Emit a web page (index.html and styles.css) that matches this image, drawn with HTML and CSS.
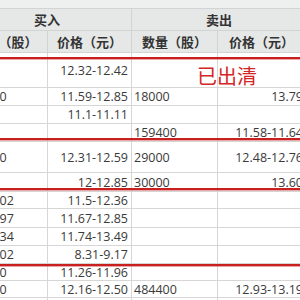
FILE: index.html
```html
<!DOCTYPE html>
<html lang="zh-CN">
<head>
<meta charset="utf-8">
<title>买入卖出</title>
<link rel="stylesheet" href="styles.css">
</head>
<body>
<div class="sheet">
  <div class="row strip"><div class="c wide"></div><div class="c wide"></div></div>
  <div class="row hdr hdr1"><div class="c wide">买入</div><div class="c wide">卖出</div></div>
  <div class="row hdr hdr2"><div class="c">数量（股）</div><div class="c">价格（元）</div><div class="c">数量（股）</div><div class="c">价格（元）</div></div>

  <div class="row r1"><div class="c q"></div><div class="c p">12.32-12.42</div><div class="c q"></div><div class="c p"></div></div>
  <div class="row r2"><div class="c q">20000</div><div class="c p">11.59-12.85</div><div class="c q">18000</div><div class="c p">13.79</div></div>
  <div class="row r3"><div class="c q"></div><div class="c p">11.1-11.11</div><div class="c q"></div><div class="c p"></div></div>
  <div class="row r4"><div class="c q"></div><div class="c p"></div><div class="c q">159400</div><div class="c p">11.58-11.64</div></div>
  <div class="row r5"><div class="c q">20000</div><div class="c p">12.31-12.59</div><div class="c q">29000</div><div class="c p">12.48-12.76</div></div>
  <div class="row r6"><div class="c q"></div><div class="c p">12-12.85</div><div class="c q">30000</div><div class="c p">13.60</div></div>
  <div class="row r7"><div class="c q">150002</div><div class="c p">11.5-12.36</div><div class="c q"></div><div class="c p"></div></div>
  <div class="row r8"><div class="c q">120097</div><div class="c p">11.67-12.85</div><div class="c q"></div><div class="c p"></div></div>
  <div class="row r9"><div class="c q">180034</div><div class="c p">11.74-13.49</div><div class="c q"></div><div class="c p"></div></div>
  <div class="row r10"><div class="c q">100002</div><div class="c p">8.31-9.17</div><div class="c q"></div><div class="c p"></div></div>
  <div class="row r11"><div class="c q">30000</div><div class="c p">11.26-11.96</div><div class="c q"></div><div class="c p"></div></div>
  <div class="row r12"><div class="c q">40000</div><div class="c p">12.16-12.50</div><div class="c q">484400</div><div class="c p">12.93-13.19</div></div>
  <div class="row r13"><div class="c q"></div><div class="c p"></div><div class="c q"></div><div class="c p"></div></div>

  <div class="mark m1"></div>
  <div class="mark m2"></div>
  <div class="mark m3"></div>
  <div class="mark m4"></div>
  <div class="done">已出清</div>
</div>
</body>
</html>
```

FILE: styles.css
```css
html, body {
  margin: 0;
  padding: 0;
  background: #ffffff;
  overflow: hidden;
}

.sheet {
  position: relative;
  margin-left: -37px;
  width: 343px;
  font-family: "Open Sans", "Noto Sans CJK SC", sans-serif;
  font-size: 12.5px;
  color: #3a3a3a;
}

.row {
  display: grid;
  grid-template-columns: 85px 84px 86px 88px;
  border-bottom: 1px solid #d6d6d6;
  box-sizing: border-box;
}

.c {
  border-right: 1px solid #d6d6d6;
  display: flex;
  align-items: center;
  white-space: nowrap;
  overflow: hidden;
  box-sizing: border-box;
}

.wide {
  grid-column: span 2;
  justify-content: center;
}

.strip {
  height: 9px;
  background: #eef0ef;
  border-bottom-color: #d2d4d3;
}
.strip .c { border-right: none; }

.hdr {
  background: #e6e8e7;
  font-family: "Noto Sans CJK SC", sans-serif;
  font-weight: bold;
  font-size: 13px;
  color: #333333;
  height: 22px;
  border-bottom-color: #d2d4d3;
}
.hdr .c { justify-content: center; border-right-color: #d2d4d3; }
.hdr1 .c:last-child { border-right: none; }

.q { justify-content: flex-start; padding-left: 8px; }
.row .c:nth-child(3).q { padding-left: 2px; }
.p { justify-content: flex-end; padding-right: 3px; }
.row .c:nth-child(4).p { padding-right: 2px; }

.r1 { height: 35px; }
.r2 { height: 18px; }
.r3 { height: 18px; }
.r4 { height: 18px; }
.r5 { height: 31px; }
.r6 { height: 19px; }
.r7 { height: 17px; }
.r8 { height: 19px; }
.r9 { height: 18px; }
.r10 { height: 18px; }
.r11 { height: 17px; }
.r12 { height: 17px; }
.r13 { height: 18px; }

.mark {
  position: absolute;
  left: 0;
  right: 0;
  height: 2px;
  background: #c8201f;
  box-shadow: 0 0 1px 0.5px rgba(210, 60, 60, 0.45);
}
.m1 { top: 57px; }
.m2 { top: 138px; }
.m3 { top: 188px; }
.m4 { top: 264px; }

.done {
  position: absolute;
  left: 234px;
  top: 64px;
  font-family: "Noto Sans CJK SC", sans-serif;
  font-size: 20px;
  line-height: 24px;
  color: #d42626;
}
```
